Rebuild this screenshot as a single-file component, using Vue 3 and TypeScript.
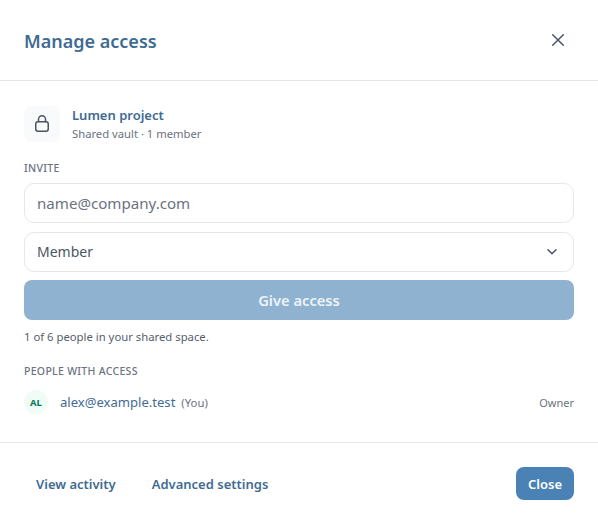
<script setup lang="ts">
const hint: string = '1 of 6 people in your shared space.'
</script>

<template>
  <div class="dialog">
    <header class="head">
      <h2>Manage access</h2>
      <button class="x" aria-label="Close">
        <svg width="20" height="20" viewBox="0 0 20 20" fill="none" stroke="#4b5563" stroke-width="1.5" stroke-linecap="round"><path d="M4.700 4.700l10.600 10.600M15.300 4.700L4.700 15.300"/></svg>
      </button>
    </header>
    <main class="body">
      <div class="vault">
        <div class="lock">
          <svg width="20" height="20" viewBox="0 0 20 20" fill="none" stroke="#4b5563" stroke-width="1.5" stroke-linecap="round" stroke-linejoin="round"><rect x="3.750" y="7.750" width="12.500" height="9.500" rx="2.200"/><path d="M6.500 7.750V5.250a3.500 3.500 0 0 1 7 0v2.500"/></svg>
        </div>
        <div class="vtext">
          <div class="vname">Lumen project</div>
          <div class="vsub">Shared vault · 1 member</div>
        </div>
      </div>
      <div class="label invite">INVITE</div>
      <div class="field placeholder">name@company.com</div>
      <div class="field select">
        <span>Member</span>
        <svg width="16" height="16" viewBox="0 0 16 16" fill="none" stroke="#4b5563" stroke-width="1.500" stroke-linecap="round" stroke-linejoin="round"><path d="M3 6.700l4 4 4-4"/></svg>
      </div>
      <button class="give">Give access</button>
      <p class="hint">{{ hint }}</p>
      <div class="label people">PEOPLE WITH ACCESS</div>
      <div class="person">
        <span class="avatar">AL</span>
        <span class="mail">alex@example.test</span>
        <span class="you">(You)</span>
        <span class="role">Owner</span>
      </div>
    </main>
    <footer class="foot">
      <a class="link">View activity</a>
      <a class="link">Advanced settings</a>
      <button class="close">Close</button>
    </footer>
  </div>
</template>

<style scoped>
.dialog { width: 598px; height: 524px; background: #fff; font-family: "Noto Sans", sans-serif; color: #3f6b94; display: flex; flex-direction: column; box-sizing: border-box; }
.head { height: 81px; box-sizing: border-box; border-bottom: 1px solid #e5e7eb; padding: 0 24px; display: flex; align-items: center; justify-content: space-between; }
h2 { margin: 2px 0 0; font-size: 18px; font-weight: 600; color: #3f6b94; }
.x { width: 28px; height: 28px; border: 0; background: none; padding: 0; display: flex; align-items: center; justify-content: center; margin-right: 2px; }
.body { padding: 24px 24px 0; height: 362px; box-sizing: border-box; border-bottom: 1px solid #e5e7eb; }
.vault { display: flex; align-items: center; gap: 12px; }
.lock { width: 36px; height: 36px; border-radius: 8px; background: #f8fafc; display: flex; align-items: center; justify-content: center; }
.vtext { padding-top: 1px; }
.vname { font-size: 13px; font-weight: 600; line-height: 18px; }
.vsub { font-size: 11.25px; line-height: 19px; color: #6b7280; }
.label { font-size: 10.500px; font-weight: 500; color: #6b7280; letter-spacing: .3px; line-height: 14px; }
.invite { margin-top: 18px; }
.field { height: 40px; box-sizing: border-box; margin-top: 8px; border: 1px solid #e5e7eb; border-radius: 10px; padding: 0 12px; display: flex; align-items: center; justify-content: space-between; font-size: 14px; color: #4b5563; }
.placeholder { margin-top: 8px; color: #6b7280; font-size: 15.100px; }
.select { margin-top: 9px; padding-bottom: 2px; }
.give { display: block; width: 100%; height: 40px; margin-top: 8px; border: 0; border-radius: 8px; background: #8fb2d1; color: #edf3f8; font: 600 14.700px "Noto Sans", sans-serif; }
.hint { margin: 9px 0 0; font-size: 11.300px; line-height: 16px; color: #55606e; }
.people { margin-top: 19px; }
.person { display: flex; align-items: center; margin-top: 12px; height: 24px; }
.avatar { width: 24px; height: 24px; border-radius: 50%; background: #f0fdf6; color: #047857; font-size: 9.500px; font-weight: 700; display: flex; align-items: center; justify-content: center; margin-right: 12px; }
.mail { font-size: 13.070px; }
.you { font-size: 11.300px; color: #6b7280; margin-left: 6px; }
.role { margin-left: auto; font-size: 11px; color: #6b7280; }
.foot { flex: 1; display: flex; align-items: center; padding: 0 24px 0 36px; gap: 36px; }
.link { font-size: 13px; font-weight: 600; }
.close { margin-left: auto; width: 58px; height: 33px; border: 0; border-radius: 8px; background: #4a82b5; color: #fff; font: 600 13px "Noto Sans", sans-serif; }
</style>
